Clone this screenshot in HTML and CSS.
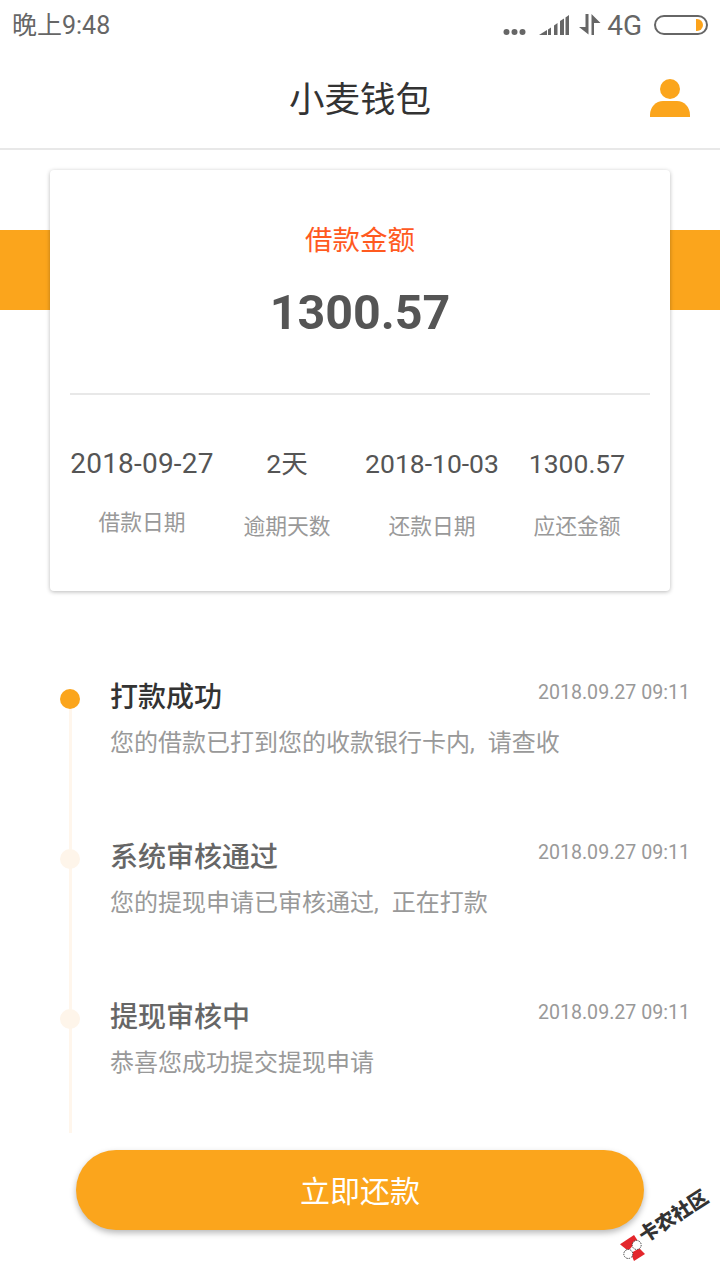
FILE: index.html
```html
<!DOCTYPE html>
<html lang="zh-CN">
<head>
<meta charset="utf-8">
<title>小麦钱包</title>
<link rel="stylesheet" href="styles.css">
</head>
<body>
<div class="status">
  <span class="clock">晚上9:48</span>
  <div class="status-right">
    <svg class="ic-dots" width="23" height="8" viewBox="0 0 23 8"><circle cx="3.500" cy="4" r="3"/><circle cx="11.500" cy="4" r="3"/><circle cx="19.500" cy="4" r="3"/></svg>
    <svg class="ic-signal" width="30" height="20" viewBox="0 0 30 20"><path d="M0 20 L8 15 V20Z"/><path d="M9 14.500 L12 12.500 V20 H9Z"/><path d="M15 10.500 L18.500 8 V20 H15Z"/><path d="M21 6 L25 3.500 V20 H21Z"/><path d="M26.500 2.500 L30 0 V20 H26.500Z"/></svg>
    <svg class="ic-arrows" width="22" height="21" viewBox="0 0 22 21"><path d="M0 13 H6.500 V0 H9.500 V20.500Z"/><path d="M21.500 9 H15 V21 H12.500 V0Z"/></svg>
    <span class="net">4G</span>
    <div class="battery"><span class="battery-fill"></span></div>
  </div>
</div>
<header class="nav">
  <h1 class="nav-title">小麦钱包</h1>
  <svg class="ic-user" width="40" height="38" viewBox="0 0 40 38"><ellipse cx="20" cy="10" rx="10" ry="10"/><path d="M0 38 V36 C0 28 6 22 13 22 H27 C34 22 40 28 40 36 V38Z"/></svg>
</header>
<main class="content">
  <div class="band"></div>
  <section class="card">
    <div class="card-top">
      <div class="amount-label">借款金额</div>
      <div class="amount">1300.57</div>
    </div>
    <div class="details">
      <div class="detail"><div class="detail-value wide">2018-09-27</div><div class="detail-label raised">借款日期</div></div>
      <div class="detail"><div class="detail-value">2天</div><div class="detail-label">逾期天数</div></div>
      <div class="detail"><div class="detail-value">2018-10-03</div><div class="detail-label">还款日期</div></div>
      <div class="detail"><div class="detail-value">1300.57</div><div class="detail-label">应还金额</div></div>
    </div>
  </section>
  <ol class="timeline">
    <li class="step active">
      <span class="dot"></span>
      <div class="step-head"><span class="step-title">打款成功</span><time class="step-time">2018.09.27 09:11</time></div>
      <p class="step-desc">您的借款已打到您的收款银行卡内<span class="comma">, </span>请查收</p>
    </li>
    <li class="step">
      <span class="dot"></span>
      <div class="step-head"><span class="step-title">系统审核通过</span><time class="step-time">2018.09.27 09:11</time></div>
      <p class="step-desc">您的提现申请已审核通过<span class="comma">, </span>正在打款</p>
    </li>
    <li class="step">
      <span class="dot"></span>
      <div class="step-head"><span class="step-title">提现审核中</span><time class="step-time">2018.09.27 09:11</time></div>
      <p class="step-desc">恭喜您成功提交提现申请</p>
    </li>
  </ol>
</main>
<button class="repay">立即还款</button>
<svg class="wm-logo" width="27" height="28" viewBox="0 0 27 28"><path d="M0 10.300 L14 1 L17.300 6 L8.300 17Z" fill="#e3262b"/><path d="M10.700 19.300 L19.300 14.300 L25 20 L14 27Z" fill="#e3262b"/><circle cx="16.700" cy="11" r="4.500" fill="#fff" stroke="#444" stroke-width="1" stroke-dasharray="1.500 1"/><circle cx="8.300" cy="20" r="4.500" fill="#fff" stroke="#444" stroke-width="1" stroke-dasharray="1.500 1"/></svg>
<span class="wm-text">卡农社区</span>
</body>
</html>
```
FILE: styles.css
```css
* { box-sizing: border-box; }
html, body { margin: 0; padding: 0; }
body {
  width: 720px;
  height: 1280px;
  position: relative;
  overflow: hidden;
  background: #fff;
  font-family: Roboto, "Noto Sans CJK SC", sans-serif;
  color: #333;
}
.status {
  height: 50px;
  padding: 2px 12px 0 12px;
  display: flex;
  justify-content: space-between;
  align-items: center;
  color: #666;
}
.clock { font-size: 25px; line-height: 48px; }
.status-right { display: flex; align-items: center; }
.status-right svg { fill: #666; display: block; }
.ic-dots { margin: 12px 13px 0 0; }
.ic-signal { margin: 0 10px 3px 0; }
.ic-arrows { margin: 0 6px 3px 0; }
.net { font-size: 28px; line-height: 30px; margin-right: 12px; }
.battery {
  width: 54px;
  height: 20px;
  margin-bottom: 2px;
  border: 2px solid #666;
  border-radius: 10px;
  display: flex;
  justify-content: flex-end;
  align-items: center;
  padding-right: 3px;
}
.battery-fill {
  width: 7px;
  height: 12px;
  background: #fca31b;
  border-radius: 0 6px 6px 0;
}
.nav {
  height: 100px;
  border-bottom: 2px solid #e8e8e8;
  display: flex;
  justify-content: center;
  align-items: center;
  position: relative;
}
.nav-title { margin: 2px 0 0; font-size: 35.500px; font-weight: 400; line-height: 50px; color: #333; }
.ic-user { position: absolute; right: 30px; top: 29px; fill: #fba51c; }
.content { position: relative; padding-top: 20px; }
.band { position: absolute; left: 0; right: 0; top: 80px; height: 80px; background: #fba51c; }
.card {
  position: relative;
  width: 620px;
  height: 421px;
  margin: 0 auto;
  padding: 0 20px;
  background: #fff;
  border-radius: 4px;
  box-shadow: 0 1px 4px rgba(0,0,0,.28);
}
.card-top {
  height: 225px;
  border-bottom: 2px solid #e8e8e8;
  text-align: center;
  padding-top: 51px;
}
.amount-label { font-size: 27.500px; line-height: 40px; color: #ff5a1f; }
.amount { margin-top: 22px; font-size: 48.400px; line-height: 60px; font-weight: 700; color: #555; }
.details { display: grid; grid-template-columns: repeat(4, 145px); margin-left: -.5px; padding-top: 49px; }
.detail { text-align: center; }
.detail-value { font-size: 26.500px; line-height: 40px; color: #555; white-space: nowrap; }
.detail-value.wide { font-size: 28px; letter-spacing: .2px; }
.detail-label { margin-top: 28px; font-size: 21.800px; line-height: 30px; color: #999; }
.detail-label.raised { margin-top: 24px; }
.timeline { list-style: none; margin: 75px 0 0; padding: 0 30px 0 60px; }
.step { position: relative; height: 160px; padding-left: 50px; }
.step::before {
  content: "";
  position: absolute;
  left: 8.500px;
  top: 29px;
  width: 3px;
  height: 160px;
  background: #fff6ec;
}
.step:last-child::before { height: 118px; }
.dot {
  position: absolute;
  left: 0;
  top: 23px;
  z-index: 1;
  width: 20px;
  height: 20px;
  border-radius: 50%;
  background: #fef5ea;
}
.active .dot { background: #fba51c; }
.step-head { display: flex; justify-content: space-between; align-items: flex-start; }
.step-title { font-size: 28px; line-height: 44px; font-weight: 500; color: #666; padding-top: 10px; height: 56px; }
.active .step-title { color: #333; }
.step-time { font-size: 19.600px; line-height: 28px; color: #999; margin-top: 13px; }
.step-desc { margin: 0; font-size: 24px; line-height: 36px; color: #999; padding-top: 3px; }
.comma { letter-spacing: 3.500px; }
.repay {
  position: absolute;
  left: 76px;
  top: 1150px;
  width: 568px;
  height: 80px;
  padding: 0 0 2px;
  border: 0;
  border-radius: 40px;
  background: #fba51c;
  color: #fff;
  font-family: inherit;
  font-size: 30px;
  box-shadow: 0 3px 6px rgba(0,0,0,.28);
}
.wm-logo { position: absolute; left: 620px; top: 1234px; }
.wm-text {
  position: absolute;
  left: 633px;
  top: 1203px;
  width: 82px;
  font-size: 19.500px;
  line-height: 28px;
  font-weight: 900;
  color: #333;
  white-space: nowrap;
  text-align: center;
  transform: rotate(-33deg);
}
```
